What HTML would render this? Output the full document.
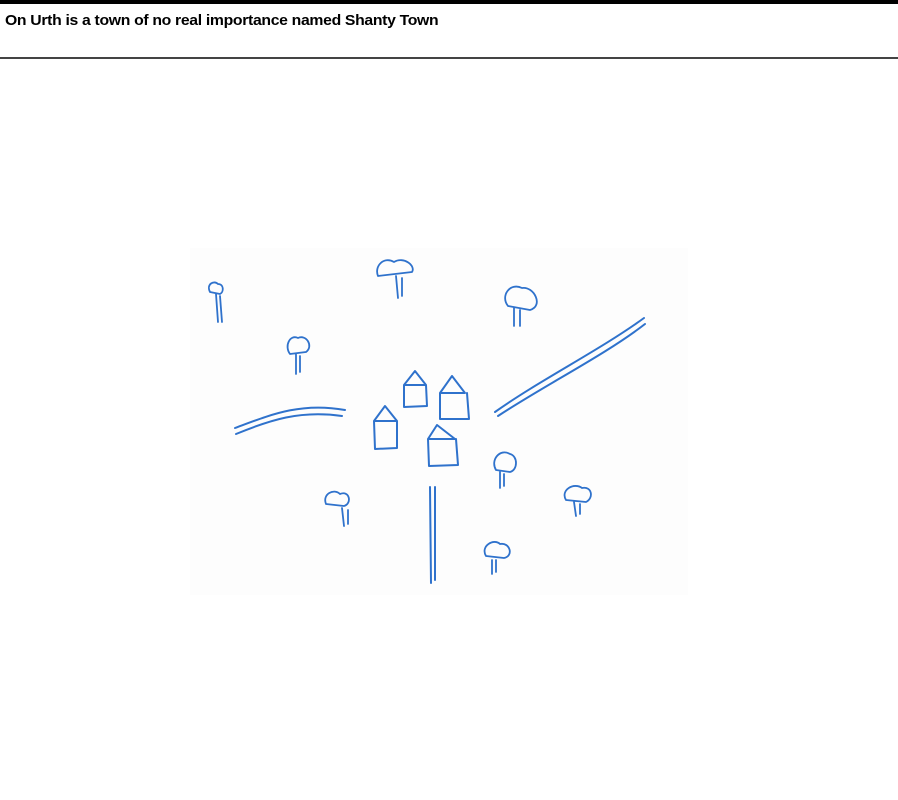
<!DOCTYPE html>
<html><head><meta charset="utf-8"><style>
body{margin:0;width:898px;height:800px;background:#fff;overflow:hidden;position:relative;font-family:"Liberation Sans",sans-serif}
.top{position:absolute;left:0;top:0;width:898px;height:4px;background:#000}
.t{position:absolute;left:5px;top:12px;font-weight:bold;font-size:15px;letter-spacing:-0.3px;color:#000;transform:scaleX(1.05);transform-origin:left top}
.bot{position:absolute;left:0;top:57px;width:898px;height:2px;background:#444}
svg{position:absolute;left:0;top:0}
</style></head><body>
<div class="top"></div>
<div class="t">On Urth is a town of no real importance named Shanty Town</div>
<div class="bot"></div>
<svg width="898" height="800" fill="none" stroke="#2f72cc" stroke-width="2" stroke-linecap="round" stroke-linejoin="round">
<rect x="190" y="248" width="498" height="347" fill="#fdfdfd" stroke="none"/>
<path d="M404 385 L415 371 L426 385 Z M404 385 L404 407 L427 406 L426 385"/>
<path d="M440 393 L452 376 L465 393 Z M440 393 L440 419 L469 419 L467 393"/>
<path d="M374 421 L385 406 L397 421 Z M374 421 L375 449 L397 448 L397 421"/>
<path d="M428 439 L437 425 L455 439 Z M428 439 L429 466 L458 465 L456 439"/>
<path d="M235 428 C270 415 300 402 345 410"/><path d="M236 434 C270 420 300 410 342 416"/>
<path d="M495 412 C540 380 600 350 644 318"/><path d="M498 416 C545 385 605 355 645 324"/>
<path d="M430 487 L431 583"/><path d="M435 487 L435 580"/>
<g stroke-width="1.8">
<path d="M210 292 C206 284 214 280 218 284 C224 284 224 292 220 294 Z M216 294 L218 322 M220 296 L222 322"/>
<path d="M290 354 C284 346 290 334 298 338 C306 334 314 346 306 352 Z M296 354 L296 374 M300 356 L300 372"/>
<path d="M378 276 C374 266 384 256 394 262 C404 256 416 266 412 272 Z M396 276 L398 298 M402 278 L402 296"/>
<path d="M508 306 C500 296 510 282 522 288 C534 286 544 306 530 310 Z M514 308 L514 326 M520 310 L520 326"/>
<path d="M496 470 C490 460 500 448 510 454 C518 456 518 470 510 472 Z M500 472 L500 488 M504 474 L504 486"/>
<path d="M326 504 C322 494 334 488 340 494 C350 490 352 504 344 506 Z M342 508 L344 526 M348 510 L348 524"/>
<path d="M566 500 C560 490 574 482 582 488 C592 486 594 498 586 502 Z M574 502 L576 516 M580 504 L580 514"/>
<path d="M486 556 C480 546 494 538 500 544 C510 542 514 556 504 558 Z M492 560 L492 574 M496 560 L496 572"/>
</g>
</svg>
</body></html>
